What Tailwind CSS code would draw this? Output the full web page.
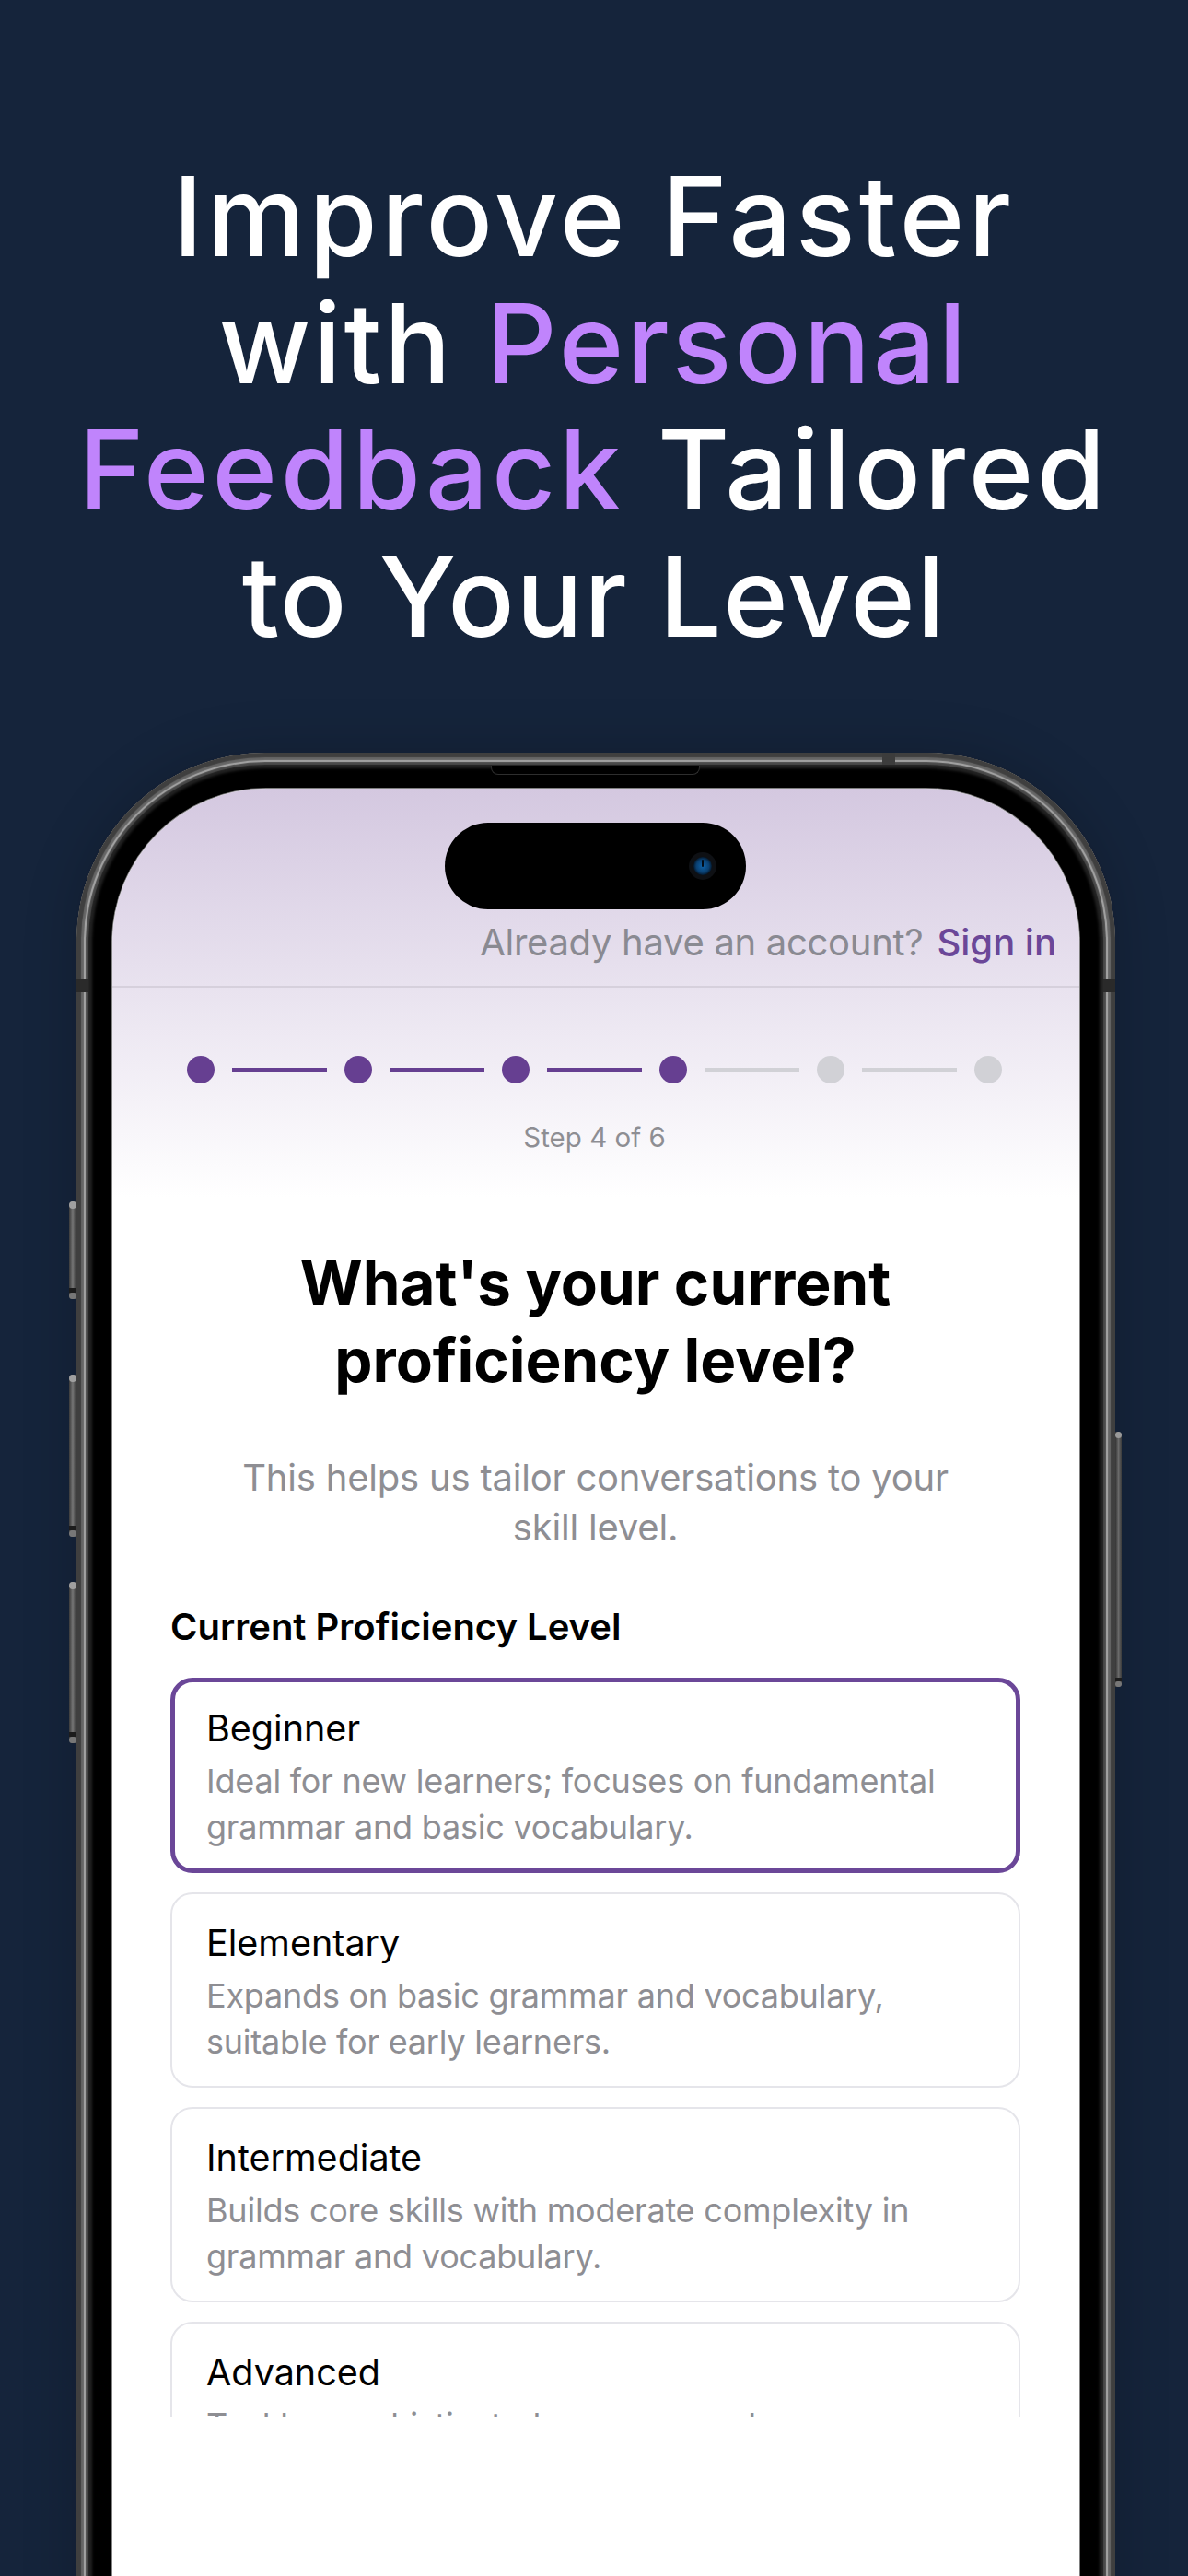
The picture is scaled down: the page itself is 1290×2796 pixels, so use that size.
<!DOCTYPE html>
<html lang="en">
    <head>
        <meta charset="UTF-8" />
        <meta name="viewport" content="width=device-width, initial-scale=1.0" />
        <title>Proficiency level</title>
        <script src="https://cdn.jsdelivr.net/npm/@tailwindcss/browser@4"></script>
    </head>
    <body class="bg-[#15243b] h-[2796px] overflow-hidden font-['Inter',sans-serif]">
        <h1 class="pt-[166px] text-center text-white text-[120px] leading-[137.5px] font-[450]">
            <span class="tracking-[4.3px]">Improve Faster</span><br />
            <span class="tracking-[3px]">with <span class="text-[#c084fc]">Personal</span></span><br />
            <span class="tracking-[3.85px]"><span class="text-[#c084fc]">Feedback</span> Tailored</span><br />
            <span class="tracking-[1.6px]">to Your Level</span>
        </h1>

        <!-- phone -->
        <div class="relative mt-[101px] ml-[83px] w-[1128px] h-[2200px] rounded-[205px] bg-black p-[39px] shadow-[inset_0_0_1px_5px_#3f3f3f,inset_0_0_1px_8px_#666,inset_0_0_1px_10px_#a8a8a8,inset_0_0_1px_13px_#4a4a4a,inset_0_0_3px_17px_#222,0_0_60px_rgba(0,0,0,0.2)]">
            <!-- side buttons -->
            <div class="absolute left-[-8px] top-[487px] w-[8px] h-[106px] rounded-l-[4px] bg-linear-to-r from-[#3a3a3a] via-[#777] to-[#333]">
                <div class="absolute inset-x-0 top-0 h-[8px] rounded-full bg-[#a0a0a0]"></div>
                <div class="absolute inset-x-0 bottom-[7px] h-[5px] bg-[#1c1c1c]"></div>
                <div class="absolute inset-x-0 bottom-0 h-[7px] rounded-full bg-[#777]"></div>
            </div>
            <div class="absolute left-[-8px] top-[675px] w-[8px] h-[176px] rounded-l-[4px] bg-linear-to-r from-[#3a3a3a] via-[#777] to-[#333]">
                <div class="absolute inset-x-0 top-0 h-[8px] rounded-full bg-[#a0a0a0]"></div>
                <div class="absolute inset-x-0 bottom-[7px] h-[5px] bg-[#1c1c1c]"></div>
                <div class="absolute inset-x-0 bottom-0 h-[7px] rounded-full bg-[#777]"></div>
            </div>
            <div class="absolute left-[-8px] top-[900px] w-[8px] h-[175px] rounded-l-[4px] bg-linear-to-r from-[#3a3a3a] via-[#777] to-[#333]">
                <div class="absolute inset-x-0 top-0 h-[8px] rounded-full bg-[#a0a0a0]"></div>
                <div class="absolute inset-x-0 bottom-[7px] h-[5px] bg-[#1c1c1c]"></div>
                <div class="absolute inset-x-0 bottom-0 h-[7px] rounded-full bg-[#777]"></div>
            </div>
            <div class="absolute right-[-7px] top-[737px] w-[7px] h-[277px] rounded-r-[4px] bg-linear-to-r from-[#333] via-[#6a6a6a] to-[#3a3a3a]">
                <div class="absolute inset-x-0 top-0 h-[7px] rounded-full bg-[#999]"></div>
                <div class="absolute inset-x-0 bottom-[6px] h-[4px] bg-[#1c1c1c]"></div>
                <div class="absolute inset-x-0 bottom-0 h-[6px] rounded-full bg-[#777]"></div>
            </div>

            <!-- antenna bands and speaker -->
            <div class="absolute left-[875px] top-0 w-[14px] h-[13px] bg-[#3c3c3c]"></div>
            <div class="absolute left-0 top-[246px] w-[13px] h-[14px] bg-[#2a2a2a]"></div>
            <div class="absolute right-0 top-[246px] w-[13px] h-[14px] bg-[#2a2a2a]"></div>
            <div class="absolute left-[450px] top-[14px] w-[227px] h-[10px] rounded-b-[8px] bg-black border border-t-0 border-[#2e2e2e]"></div>

            <!-- screen -->
            <div class="relative w-[1050px] h-full rounded-[167px] overflow-hidden bg-white shadow-[0_0_0_1px_rgba(255,255,255,0.5)]">
                <!-- dynamic island -->
                <div class="absolute left-[361px] top-[37px] w-[327px] h-[94px] rounded-[47px] bg-black">
                    <svg class="absolute left-[264px] top-[31px]" width="32" height="32" viewBox="0 0 32 32">
                        <defs>
                            <radialGradient id="lens">
                                <stop offset="0" stop-color="#0f62a8" />
                                <stop offset="0.7" stop-color="#0a3f70" />
                                <stop offset="1" stop-color="#04182c" />
                            </radialGradient>
                        </defs>
                        <circle cx="16" cy="16" r="15" fill="#0e1014" />
                        <circle cx="16" cy="16" r="10" fill="url(#lens)" />
                        <rect x="15" y="9" width="2" height="8" rx="1" fill="#020b16" />
                    </svg>
                </div>

                <div class="h-[444px] bg-linear-to-b from-[#d4c8e0] to-white">
                    <div class="h-[216px] flex items-end justify-end pr-[25px] pb-[23px] border-b-2 border-[#d6d0dc] text-[40px] leading-[48px]">
                        <span class="text-[#8a8a92] tracking-[-0.3px]">Already have an account?</span>
                        <span class="ml-[15px] text-[#6b4798] font-medium">Sign in</span>
                    </div>
                    <div class="mt-[74px] pr-[3px] flex items-center justify-center gap-[19px]">
                        <div class="w-[30px] h-[30px] rounded-full bg-[#663f91]"></div>
                        <div class="w-[103px] h-[5px] bg-[#663f91]"></div>
                        <div class="w-[30px] h-[30px] rounded-full bg-[#663f91]"></div>
                        <div class="w-[103px] h-[5px] bg-[#663f91]"></div>
                        <div class="w-[30px] h-[30px] rounded-full bg-[#663f91]"></div>
                        <div class="w-[103px] h-[5px] bg-[#663f91]"></div>
                        <div class="w-[30px] h-[30px] rounded-full bg-[#663f91]"></div>
                        <div class="w-[103px] h-[5px] bg-[#d1d1d6]"></div>
                        <div class="w-[30px] h-[30px] rounded-full bg-[#d1d1d6]"></div>
                        <div class="w-[103px] h-[5px] bg-[#d1d1d6]"></div>
                        <div class="w-[30px] h-[30px] rounded-full bg-[#d1d1d6]"></div>
                    </div>
                    <p class="mt-[38px] pr-[3px] text-center text-[29.5px] leading-[40px] text-[#8e8e93]">Step 4 of 6</p>
                </div>

                <div class="pl-[63px] pr-[64px]">
                    <h2 class="mt-[51px] text-center text-black text-[65.5px] leading-[84px] font-bold">
                        What's your current<br />proficiency level?
                    </h2>
                    <p class="mt-[58px] text-center text-[#8e8e93] text-[40px] leading-[54px] tracking-[-0.2px]">
                        This helps us tailor conversations to your<br />skill level.
                    </p>
                    <p class="mt-[57px] text-black text-[40px] leading-[48px] font-semibold">Current Proficiency Level</p>

                    <div class="mt-[31px] h-[802px] overflow-hidden flex flex-col gap-[21px]">
                        <div class="shrink-0 h-[212px] rounded-[24px] border-[5px] border-[#6b4798] px-[34px] pt-[26px]">
                            <p class="text-black text-[39.5px] leading-[48px]">Beginner</p>
                            <p class="mt-[8px] text-[#8e8e93] text-[36px] leading-[50px] tracking-[-0.22px]">Ideal for new learners; focuses on fundamental<br />grammar and basic vocabulary.</p>
                        </div>
                        <div class="shrink-0 h-[212px] rounded-[24px] border-2 border-[#e5e5ea] px-[37px] pt-[29px]">
                            <p class="text-black text-[39.5px] leading-[48px]">Elementary</p>
                            <p class="mt-[8px] text-[#8e8e93] text-[36px] leading-[50px] tracking-[-0.22px]">Expands on basic grammar and vocabulary,<br />suitable for early learners.</p>
                        </div>
                        <div class="shrink-0 h-[212px] rounded-[24px] border-2 border-[#e5e5ea] px-[37px] pt-[29px]">
                            <p class="text-black text-[39.5px] leading-[48px]">Intermediate</p>
                            <p class="mt-[8px] text-[#8e8e93] text-[36px] leading-[50px] tracking-[-0.22px]">Builds core skills with moderate complexity in<br />grammar and vocabulary.</p>
                        </div>
                        <div class="shrink-0 h-[212px] rounded-[24px] border-2 border-[#e5e5ea] px-[37px] pt-[29px]">
                            <p class="text-black text-[39.5px] leading-[48px]">Advanced</p>
                            <p class="mt-[8px] text-[#8e8e93] text-[36px] leading-[50px] tracking-[-0.22px]">Tackles sophisticated grammar and<br />nuanced vocabulary.</p>
                        </div>
                    </div>
                </div>
            </div>
        </div>
    </body>
</html>
